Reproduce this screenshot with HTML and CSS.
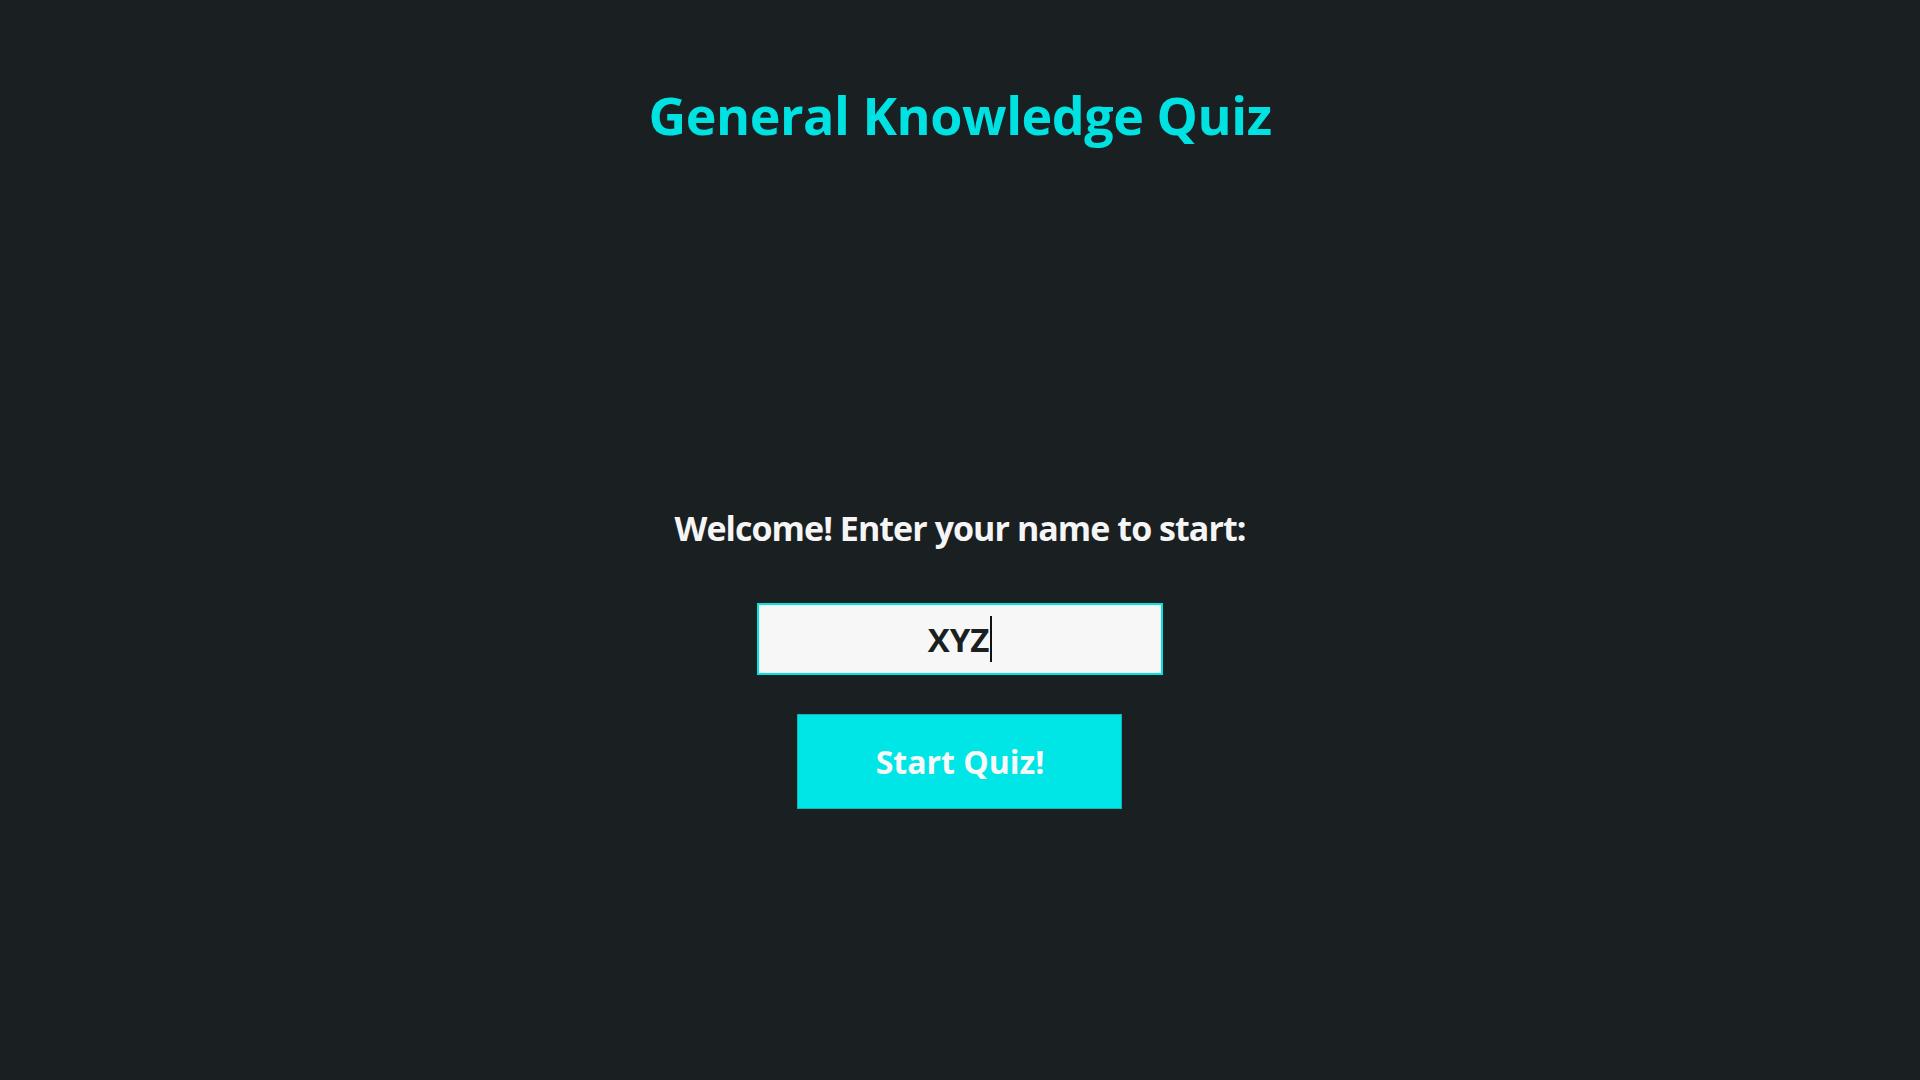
FILE: index.html
```html
<!DOCTYPE html>
<html lang="en">
<head>
<meta charset="utf-8">
<title>General Knowledge Quiz</title>
<link rel="stylesheet" href="styles.css">
</head>
<body>
<div class="app">
  <h1 class="title">General Knowledge Quiz</h1>
  <main class="start">
    <p class="prompt">Welcome! Enter your name to start:</p>
    <div class="name-field"><span class="name-text">XYZ</span><span class="caret"></span></div>
    <button class="start-btn" type="button">Start Quiz!</button>
  </main>
</div>
</body>
</html>
```
FILE: styles.css
```css
* { box-sizing: border-box; }
html, body {
  margin: 0;
  padding: 0;
  background: #1a1f22;
  height: 100%;
}
body {
  font-family: "Open Sans", "Noto Sans", "Liberation Sans", sans-serif;
  color: #f5f5f5;
}
.app {
  display: flex;
  flex-direction: column;
  align-items: center;
  padding-top: 84px;
}
.title {
  margin: 0;
  font-size: 52px;
  line-height: 62px;
  font-weight: 700;
  letter-spacing: -0.45px;
  color: #00e1e1;
}
.start {
  display: flex;
  flex-direction: column;
  align-items: center;
  margin-top: 362px;
}
.prompt {
  margin: 0;
  font-size: 34px;
  line-height: 40px;
  font-weight: 700;
  letter-spacing: -0.95px;
  color: #f5f5f5;
}
.name-field {
  margin-top: 55px;
  width: 406px;
  height: 72px;
  border: 2px solid #00e3e3;
  background: #f7f7f7;
  display: flex;
  align-items: center;
  justify-content: center;
  font-size: 33px;
  font-weight: 700;
  color: #1a1f22;
}
.name-text { line-height: 1; }
.caret {
  width: 2px;
  height: 46px;
  background: #111;
  margin-left: 1px;
}
.start-btn {
  margin-top: 39px;
  width: 325px;
  height: 95px;
  background: #00e6e6;
  border: 1px solid #10b5b5;
  color: #f8f8f8;
  font-family: inherit;
  font-size: 32px;
  font-weight: 700;
  padding: 0;
  cursor: pointer;
}
```
